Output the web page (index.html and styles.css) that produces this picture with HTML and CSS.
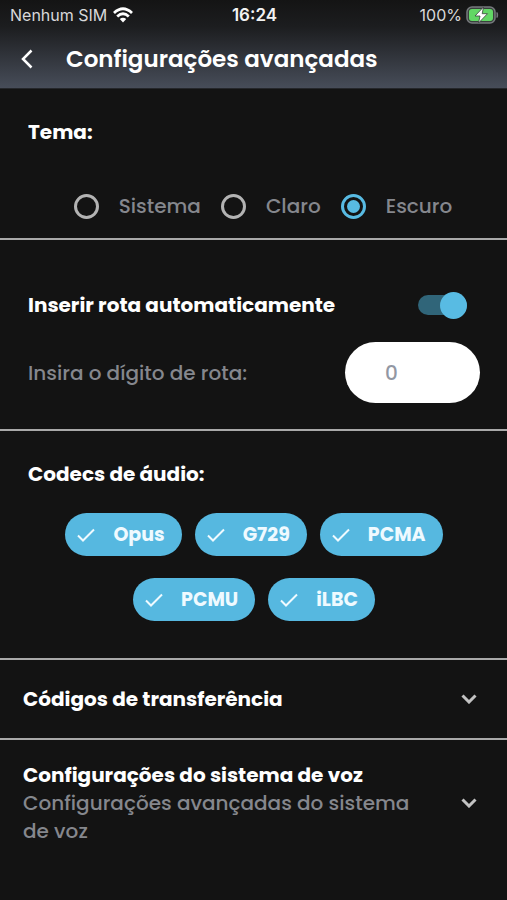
FILE: index.html
```
<!DOCTYPE html>
<html lang="pt-BR">
<head>
  <meta charset="UTF-8" />
  <meta name="viewport" content="width=device-width, initial-scale=1.0" />
  <title>Configurações avançadas</title>
  <link rel="stylesheet" href="styles.css">
</head>
<body>
  <header class="topo">
    <div class="status">
      <div class="status-esq">
        <span>Nenhum SIM</span>
        <svg class="wifi" viewBox="0 0 20 16" fill="none" stroke="currentColor" stroke-width="2.8">
          <path d="M1 6Q10 -2.400 19 6" />
          <path d="M4.200 9.400Q10 4 15.800 9.400" />
          <path d="M6.800 12L10 15.500L13.200 12Q10 9.500 6.800 12Z" fill="currentColor" stroke="none" />
        </svg>
      </div>
      <time class="hora">16:24</time>
      <div class="status-dir">
        <span>100%</span>
        <svg class="bateria" viewBox="0 0 33 18">
          <rect x="1" y="1" width="28" height="16" rx="5" fill="#39413c" stroke="#777a7e" stroke-width="1.500" />
          <rect x="3" y="3" width="24" height="12" rx="3" fill="#62d765" />
          <path d="M31 6.500Q32.500 9 31 11.500Z" fill="#777a7e" stroke="#777a7e" />
          <path d="M17.500 1L9 10H14L12.500 17L21.500 7.700H16.200Z" fill="#fff" stroke="#39413c" stroke-width="0.800" />
        </svg>
      </div>
    </div>
    <div class="barra">
      <button type="button" class="voltar" aria-label="Voltar">
        <svg viewBox="0 0 14 20" fill="none" stroke="currentColor" stroke-width="2.500"><path d="M11.500 1.500L3 10L11.500 18.500" /></svg>
      </button>
      <h1>Configurações avançadas</h1>
    </div>
  </header>

  <main>
    <section class="secao tema">
      <h2 id="titulo-tema">Tema:</h2>
      <div class="opcoes" role="radiogroup" aria-labelledby="titulo-tema">
        <label class="opcao"><input type="radio" name="tema" value="sistema" />Sistema</label>
        <label class="opcao"><input type="radio" name="tema" value="claro" />Claro</label>
        <label class="opcao"><input type="radio" name="tema" value="escuro" checked />Escuro</label>
      </div>
    </section>

    <section class="secao rota">
      <div class="linha linha-auto">
        <label class="forte" for="rota_auto">Inserir rota automaticamente</label>
        <input type="checkbox" class="chave" id="rota_auto" name="rota_auto" checked />
      </div>
      <div class="linha">
        <label for="digito">Insira o dígito de rota:</label>
        <input type="text" class="digito" id="digito" name="digito" inputmode="numeric" placeholder="0" />
      </div>
    </section>

    <section class="secao audio">
      <h2>Codecs de áudio:</h2>
      <div class="codecs">
        <label class="codec"><input type="checkbox" name="codec" value="opus" checked /><svg viewBox="0 0 18 14"><path d="M1 7.500L6 12.500L17 1.500" /></svg>Opus</label>
        <label class="codec"><input type="checkbox" name="codec" value="g729" checked /><svg viewBox="0 0 18 14"><path d="M1 7.500L6 12.500L17 1.500" /></svg>G729</label>
        <label class="codec"><input type="checkbox" name="codec" value="pcma" checked /><svg viewBox="0 0 18 14"><path d="M1 7.500L6 12.500L17 1.500" /></svg>PCMA</label>
        <label class="codec"><input type="checkbox" name="codec" value="pcmu" checked /><svg viewBox="0 0 18 14"><path d="M1 7.500L6 12.500L17 1.500" /></svg>PCMU</label>
        <label class="codec"><input type="checkbox" name="codec" value="ilbc" checked /><svg viewBox="0 0 18 14"><path d="M1 7.500L6 12.500L17 1.500" /></svg>iLBC</label>
      </div>
    </section>

    <button type="button" class="item" aria-expanded="false">
      <span class="item-texto"><strong>Códigos de transferência</strong></span>
      <svg class="seta" viewBox="0 0 16 10"><path d="M1.500 1.500L8 8L14.500 1.500" /></svg>
    </button>
    <button type="button" class="item item-alto" aria-expanded="false">
      <span class="item-texto">
        <strong>Configurações do sistema de voz</strong>
        <span>Configurações avançadas do sistema de voz</span>
      </span>
      <svg class="seta" viewBox="0 0 16 10"><path d="M1.500 1.500L8 8L14.500 1.500" /></svg>
    </button>
  </main>
</body>
</html>
```
FILE: styles.css
```
* {
  box-sizing: border-box;
}
body {
  margin: 0;
  min-height: 100vh;
  background: #131313;
  color: #85878d;
  font-family: Poppins, Inter, sans-serif;
  font-size: 20px;
  font-weight: 500;
  line-height: 28px;
}
h1, h2 {
  margin: 0;
  color: #fff;
}
h2, .forte, strong {
  font-size: 20px;
  font-weight: 700;
  color: #fff;
}
button, input {
  font: inherit;
}
button {
  border: none;
  background: none;
  padding: 0;
  color: inherit;
  text-align: left;
  cursor: pointer;
}

/* topo */
.topo {
  background: linear-gradient(#141414, #1c1d1f 30%, #474d59);
  border-bottom: 1px solid #25272b;
}
.status {
  display: grid;
  grid-template-columns: 1fr auto 1fr;
  align-items: center;
  height: 30px;
  padding: 0 8px 0 10px;
  font-family: Inter, sans-serif;
  font-size: 16px;
  font-weight: 400;
  color: #d8d8da;
}
.status-esq, .status-dir {
  display: flex;
  align-items: center;
  gap: 6px;
}
.status-dir {
  justify-content: flex-end;
  gap: 4px;
}
.wifi {
  width: 20px;
  height: 16px;
  color: #fff;
}
.bateria {
  width: 33px;
  height: 18px;
}
.hora {
  font-size: 17px;
  font-weight: 600;
  color: #f2f2f2;
}
.barra {
  display: flex;
  align-items: center;
  gap: 30px;
  height: 58px;
  padding: 0 20px;
}
.voltar {
  width: 16px;
  height: 20px;
  color: #fff;
}
.voltar svg {
  display: block;
  width: 14px;
  height: 20px;
}
h1 {
  font-size: 23px;
  font-weight: 600;
  line-height: 32px;
}

/* seções */
.secao {
  padding: 0 27px 0 28px;
  border-bottom: 2px solid #a9a9a9;
}
.tema {
  padding-top: 29px;
  padding-bottom: 18px;
}
.opcoes {
  display: flex;
  justify-content: center;
  gap: 20px;
  margin-top: 46px;
  padding-left: 18px;
}
.opcao {
  display: flex;
  align-items: center;
  gap: 20px;
}
.opcao input {
  appearance: none;
  display: grid;
  place-items: center;
  width: 25px;
  height: 25px;
  margin: 0;
  border: 3px solid #b3b3b3;
  border-radius: 50%;
}
.opcao input:checked {
  border-color: #58bbe3;
}
.opcao input:checked::before {
  content: "";
  width: 13px;
  height: 13px;
  border-radius: 50%;
  background: #58bbe3;
}
.rota {
  padding-top: 51px;
  padding-bottom: 26px;
}
.linha {
  display: flex;
  align-items: center;
  justify-content: space-between;
}
.linha-auto {
  padding-right: 13px;
  margin-bottom: 23px;
}
.chave {
  appearance: none;
  display: flex;
  align-items: center;
  justify-content: flex-end;
  width: 49px;
  height: 20px;
  margin: 0;
  border-radius: 10px;
  background: #306579;
}
.chave::before {
  content: "";
  width: 27px;
  height: 27px;
  border-radius: 50%;
  background: #58bbe3;
}
.chave:not(:checked) {
  justify-content: flex-start;
}
.digito {
  width: 135px;
  height: 61px;
  padding: 0 40px;
  border: none;
  border-radius: 31px;
  background: #fff;
  color: #85878d;
}
.digito::placeholder {
  color: #9297a3;
}
.audio {
  padding-top: 29px;
  padding-bottom: 37px;
}
.codecs {
  display: flex;
  flex-wrap: wrap;
  justify-content: center;
  gap: 22px 13px;
  margin-top: 25px;
}
.codec {
  display: flex;
  align-items: center;
  height: 43px;
  padding: 0 17px 0 12px;
  border-radius: 22px;
  background: #56b8e0;
  color: #effaff;
  font-size: 19px;
  font-weight: 700;
}
.codec input {
  appearance: none;
  margin: 0;
}
.codec svg {
  width: 18px;
  height: 14px;
  margin-right: 18px;
  fill: none;
  stroke: currentColor;
  stroke-width: 2;
}
.codec input:not(:checked) + svg {
  visibility: hidden;
}

/* itens expansíveis */
.item {
  display: flex;
  align-items: center;
  justify-content: space-between;
  width: 100%;
  min-height: 80px;
  padding: 0 30px 0 23px;
  border-bottom: 2px solid #a9a9a9;
}
.item-alto {
  padding-top: 21px;
  border-bottom: none;
}
.item-texto {
  display: flex;
  flex-direction: column;
  max-width: 400px;
}
.seta {
  flex: none;
  width: 16px;
  height: 10px;
  fill: none;
  stroke: #c3c3c3;
  stroke-width: 3;
}
```
